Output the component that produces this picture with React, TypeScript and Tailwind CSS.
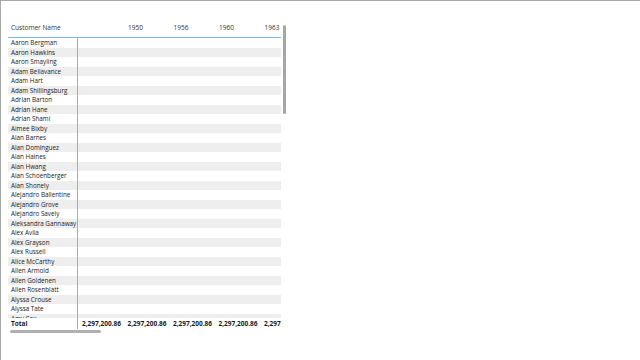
import React from "react";

const names = [
  "Aaron Bergman",
  "Aaron Hawkins",
  "Aaron Smayling",
  "Adam Bellavance",
  "Adam Hart",
  "Adam Shillingsburg",
  "Adrian Barton",
  "Adrian Hane",
  "Adrian Shami",
  "Aimee Bixby",
  "Alan Barnes",
  "Alan Dominguez",
  "Alan Haines",
  "Alan Hwang",
  "Alan Schoenberger",
  "Alan Shonely",
  "Alejandro Ballentine",
  "Alejandro Grove",
  "Alejandro Savely",
  "Aleksandra Gannaway",
  "Alex Avila",
  "Alex Grayson",
  "Alex Russell",
  "Alice McCarthy",
  "Allen Armold",
  "Allen Goldenen",
  "Allen Rosenblatt",
  "Alyssa Crouse",
  "Alyssa Tate",
  "Amy Cox",
];

const years = ["", "1950", "1956", "1960", "1963"];
const total = "2,297,200.86";

export default function App() {
  return (
    <div
      className="w-[640px] h-[360px] bg-white border-t border-l border-[#a8a8a8] overflow-hidden"
      style={{ fontFamily: '"Open Sans", "Noto Sans", sans-serif' }}
    >
      <div className="relative ml-[7px] mt-[17px] w-[278px]">
        <div className="w-[273px] overflow-hidden">
          {/* header */}
          <div className="flex h-[20px] items-center border-b border-[#7ab8ea] text-[6.5px] text-[#333]">
            <div className="w-[70px] shrink-0 pl-[3px] whitespace-nowrap">Customer Name</div>
            {years.map((y, i) => (
              <div key={i} className="w-[45.5px] shrink-0 pl-[4.5px]">
                {y}
              </div>
            ))}
          </div>
          <div className="flex">
            {/* name column */}
            <div className="w-[70px] shrink-0 border-r border-[#7ab8ea]">
              <div className="h-[280px] overflow-hidden">
                {names.map((n, i) => (
                  <div
                    key={n}
                    className={`h-[9.5px] pl-[3px] leading-[9.5px] whitespace-nowrap text-[6.3px] text-[#222] ${
                      i % 2 === 1 ? "bg-[#eeeeee]" : "bg-white"
                    }`}
                  >
                    {n}
                  </div>
                ))}
              </div>
              <div className="h-[11px] pl-[3px] leading-[11px] text-[6.5px] font-bold text-[#1a1a1a]">
                Total
              </div>
            </div>
            {/* values area */}
            <div className="flex-1 min-w-0">
              <div className="h-[280px] overflow-hidden">
                {names.map((n, i) => (
                  <div
                    key={n}
                    className={`h-[9.5px] ${i % 2 === 1 ? "bg-[#eeeeee]" : "bg-white"}`}
                  />
                ))}
              </div>
              <div className="flex h-[11px] items-center text-[6.5px] font-bold text-[#1a1a1a]">
                {years.map((_, i) => (
                  <div
                    key={i}
                    className="w-[45.5px] shrink-0 pl-[4px] whitespace-nowrap"
                  >
                    {total}
                  </div>
                ))}
              </div>
            </div>
          </div>
        </div>
        {/* vertical scrollbar thumb */}
        <div className="absolute left-[275px] top-[7px] w-[3px] h-[89px] rounded-full bg-[#a6a6a6]" />
        {/* horizontal scrollbar thumb */}
        <div className="mt-[1px] ml-[2px] w-[91px] h-[3px] rounded-full bg-[#b0b0b0]" />
      </div>
    </div>
  );
}
